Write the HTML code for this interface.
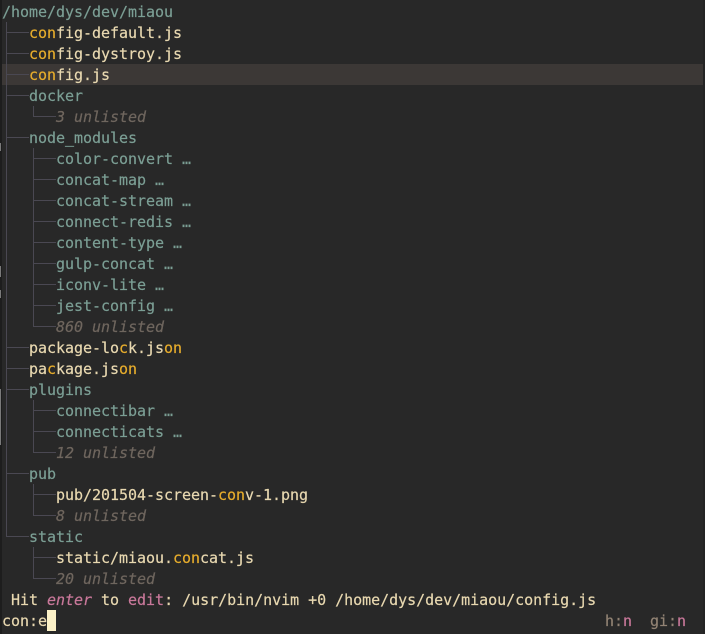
<!DOCTYPE html>
<html><head><meta charset="utf-8"><style>
html,body{margin:0;padding:0;width:705px;height:634px;overflow:hidden;background:#282828}
#w{position:relative;width:705px;height:634px;overflow:hidden;background:#282828;font:15px/21px "DejaVu Sans Mono","Liberation Mono",monospace;letter-spacing:-.03px;color:#e8d8b0;-webkit-text-stroke:.2px}
.r{position:absolute;white-space:pre;height:21px;left:2px;margin-top:1px}
.d{color:#7b9e94}
.m{color:#e6ac2c}
.u{color:#6f665e;font-style:italic}
.p{color:#c9789a}
.l{position:absolute;background:#4a4852}
.g{position:absolute;left:0;width:1px;background:#7a7a7a}
</style></head><body><div id="w">
<div style="position:absolute;left:0;top:0;width:2px;height:634px;background:#1d1d1d"></div>
<div style="position:absolute;right:0;top:0;width:2px;height:634px;background:#242424"></div>
<div style="position:absolute;left:2px;top:64px;width:701px;height:21px;background:#3c3836"></div>
<div class="g" style="top:143px;height:8px"></div>
<div class="g" style="top:266px;height:11px"></div>
<div class="g" style="top:290px;height:8px"></div>
<div class="g" style="top:389px;height:56px"></div>
<div class="l" style="left:6px;top:22px;width:1px;height:515px"></div>
<div class="l" style="left:6px;top:32px;width:23px;height:1px"></div>
<div class="l" style="left:6px;top:53px;width:23px;height:1px"></div>
<div class="l" style="left:6px;top:74px;width:23px;height:1px"></div>
<div class="l" style="left:6px;top:95px;width:23px;height:1px"></div>
<div class="l" style="left:6px;top:137px;width:23px;height:1px"></div>
<div class="l" style="left:6px;top:347px;width:23px;height:1px"></div>
<div class="l" style="left:6px;top:368px;width:23px;height:1px"></div>
<div class="l" style="left:6px;top:389px;width:23px;height:1px"></div>
<div class="l" style="left:6px;top:473px;width:23px;height:1px"></div>
<div class="l" style="left:6px;top:536px;width:23px;height:1px"></div>
<div class="l" style="left:33px;top:106px;width:1px;height:11px"></div>
<div class="l" style="left:33px;top:116px;width:23px;height:1px"></div>
<div class="l" style="left:33px;top:148px;width:1px;height:179px"></div>
<div class="l" style="left:33px;top:158px;width:23px;height:1px"></div>
<div class="l" style="left:33px;top:179px;width:23px;height:1px"></div>
<div class="l" style="left:33px;top:200px;width:23px;height:1px"></div>
<div class="l" style="left:33px;top:221px;width:23px;height:1px"></div>
<div class="l" style="left:33px;top:242px;width:23px;height:1px"></div>
<div class="l" style="left:33px;top:263px;width:23px;height:1px"></div>
<div class="l" style="left:33px;top:284px;width:23px;height:1px"></div>
<div class="l" style="left:33px;top:305px;width:23px;height:1px"></div>
<div class="l" style="left:33px;top:326px;width:23px;height:1px"></div>
<div class="l" style="left:33px;top:400px;width:1px;height:53px"></div>
<div class="l" style="left:33px;top:410px;width:23px;height:1px"></div>
<div class="l" style="left:33px;top:431px;width:23px;height:1px"></div>
<div class="l" style="left:33px;top:452px;width:23px;height:1px"></div>
<div class="l" style="left:33px;top:484px;width:1px;height:32px"></div>
<div class="l" style="left:33px;top:494px;width:23px;height:1px"></div>
<div class="l" style="left:33px;top:515px;width:23px;height:1px"></div>
<div class="l" style="left:33px;top:547px;width:1px;height:32px"></div>
<div class="l" style="left:33px;top:557px;width:23px;height:1px"></div>
<div class="l" style="left:33px;top:578px;width:23px;height:1px"></div>

<div class="r d" style="top:1px">/home/dys/dev/miaou</div>
<div class="r" style="top:22px;left:29px"><span class="m">con</span>fig-default.js</div>
<div class="r" style="top:43px;left:29px"><span class="m">con</span>fig-dystroy.js</div>
<div class="r" style="top:64px;left:29px"><span class="m">con</span>fig.js</div>
<div class="r d" style="top:85px;left:29px">docker</div>
<div class="r u" style="top:106px;left:56px">3 unlisted</div>
<div class="r d" style="top:127px;left:29px">node_modules</div>
<div class="r d" style="top:148px;left:56px">color-convert …</div>
<div class="r d" style="top:169px;left:56px">concat-map …</div>
<div class="r d" style="top:190px;left:56px">concat-stream …</div>
<div class="r d" style="top:211px;left:56px">connect-redis …</div>
<div class="r d" style="top:232px;left:56px">content-type …</div>
<div class="r d" style="top:253px;left:56px">gulp-concat …</div>
<div class="r d" style="top:274px;left:56px">iconv-lite …</div>
<div class="r d" style="top:295px;left:56px">jest-config …</div>
<div class="r u" style="top:316px;left:56px">860 unlisted</div>
<div class="r" style="top:337px;left:29px">package-lo<span class="m">c</span>k.js<span class="m">on</span></div>
<div class="r" style="top:358px;left:29px">pa<span class="m">c</span>kage.js<span class="m">on</span></div>
<div class="r d" style="top:379px;left:29px">plugins</div>
<div class="r d" style="top:400px;left:56px">connectibar …</div>
<div class="r d" style="top:421px;left:56px">connecticats …</div>
<div class="r u" style="top:442px;left:56px">12 unlisted</div>
<div class="r d" style="top:463px;left:29px">pub</div>
<div class="r" style="top:484px;left:56px">pub/201504-screen-<span class="m">con</span>v-1.png</div>
<div class="r u" style="top:505px;left:56px">8 unlisted</div>
<div class="r d" style="top:526px;left:29px">static</div>
<div class="r" style="top:547px;left:56px">static/miaou.<span class="m">con</span>cat.js</div>
<div class="r u" style="top:568px;left:56px">20 unlisted</div>
<div class="r" style="top:589px;left:11px">Hit <span class="p" style="font-style:italic">enter</span> to <span class="p">edit</span>: /usr/bin/nvim +0 /home/dys/dev/miaou/config.js</div>
<div class="r" style="top:610px;left:2px">con:e</div>
<div style="position:absolute;left:47px;top:610px;width:9px;height:21px;background:#fbf1c7"></div>
<div class="r" style="top:610px;left:605px;color:#928374">h:<span class="p">n</span></div>
<div class="r" style="top:610px;left:650px;color:#928374">gi:<span class="p">n</span></div>
</div></body></html>
